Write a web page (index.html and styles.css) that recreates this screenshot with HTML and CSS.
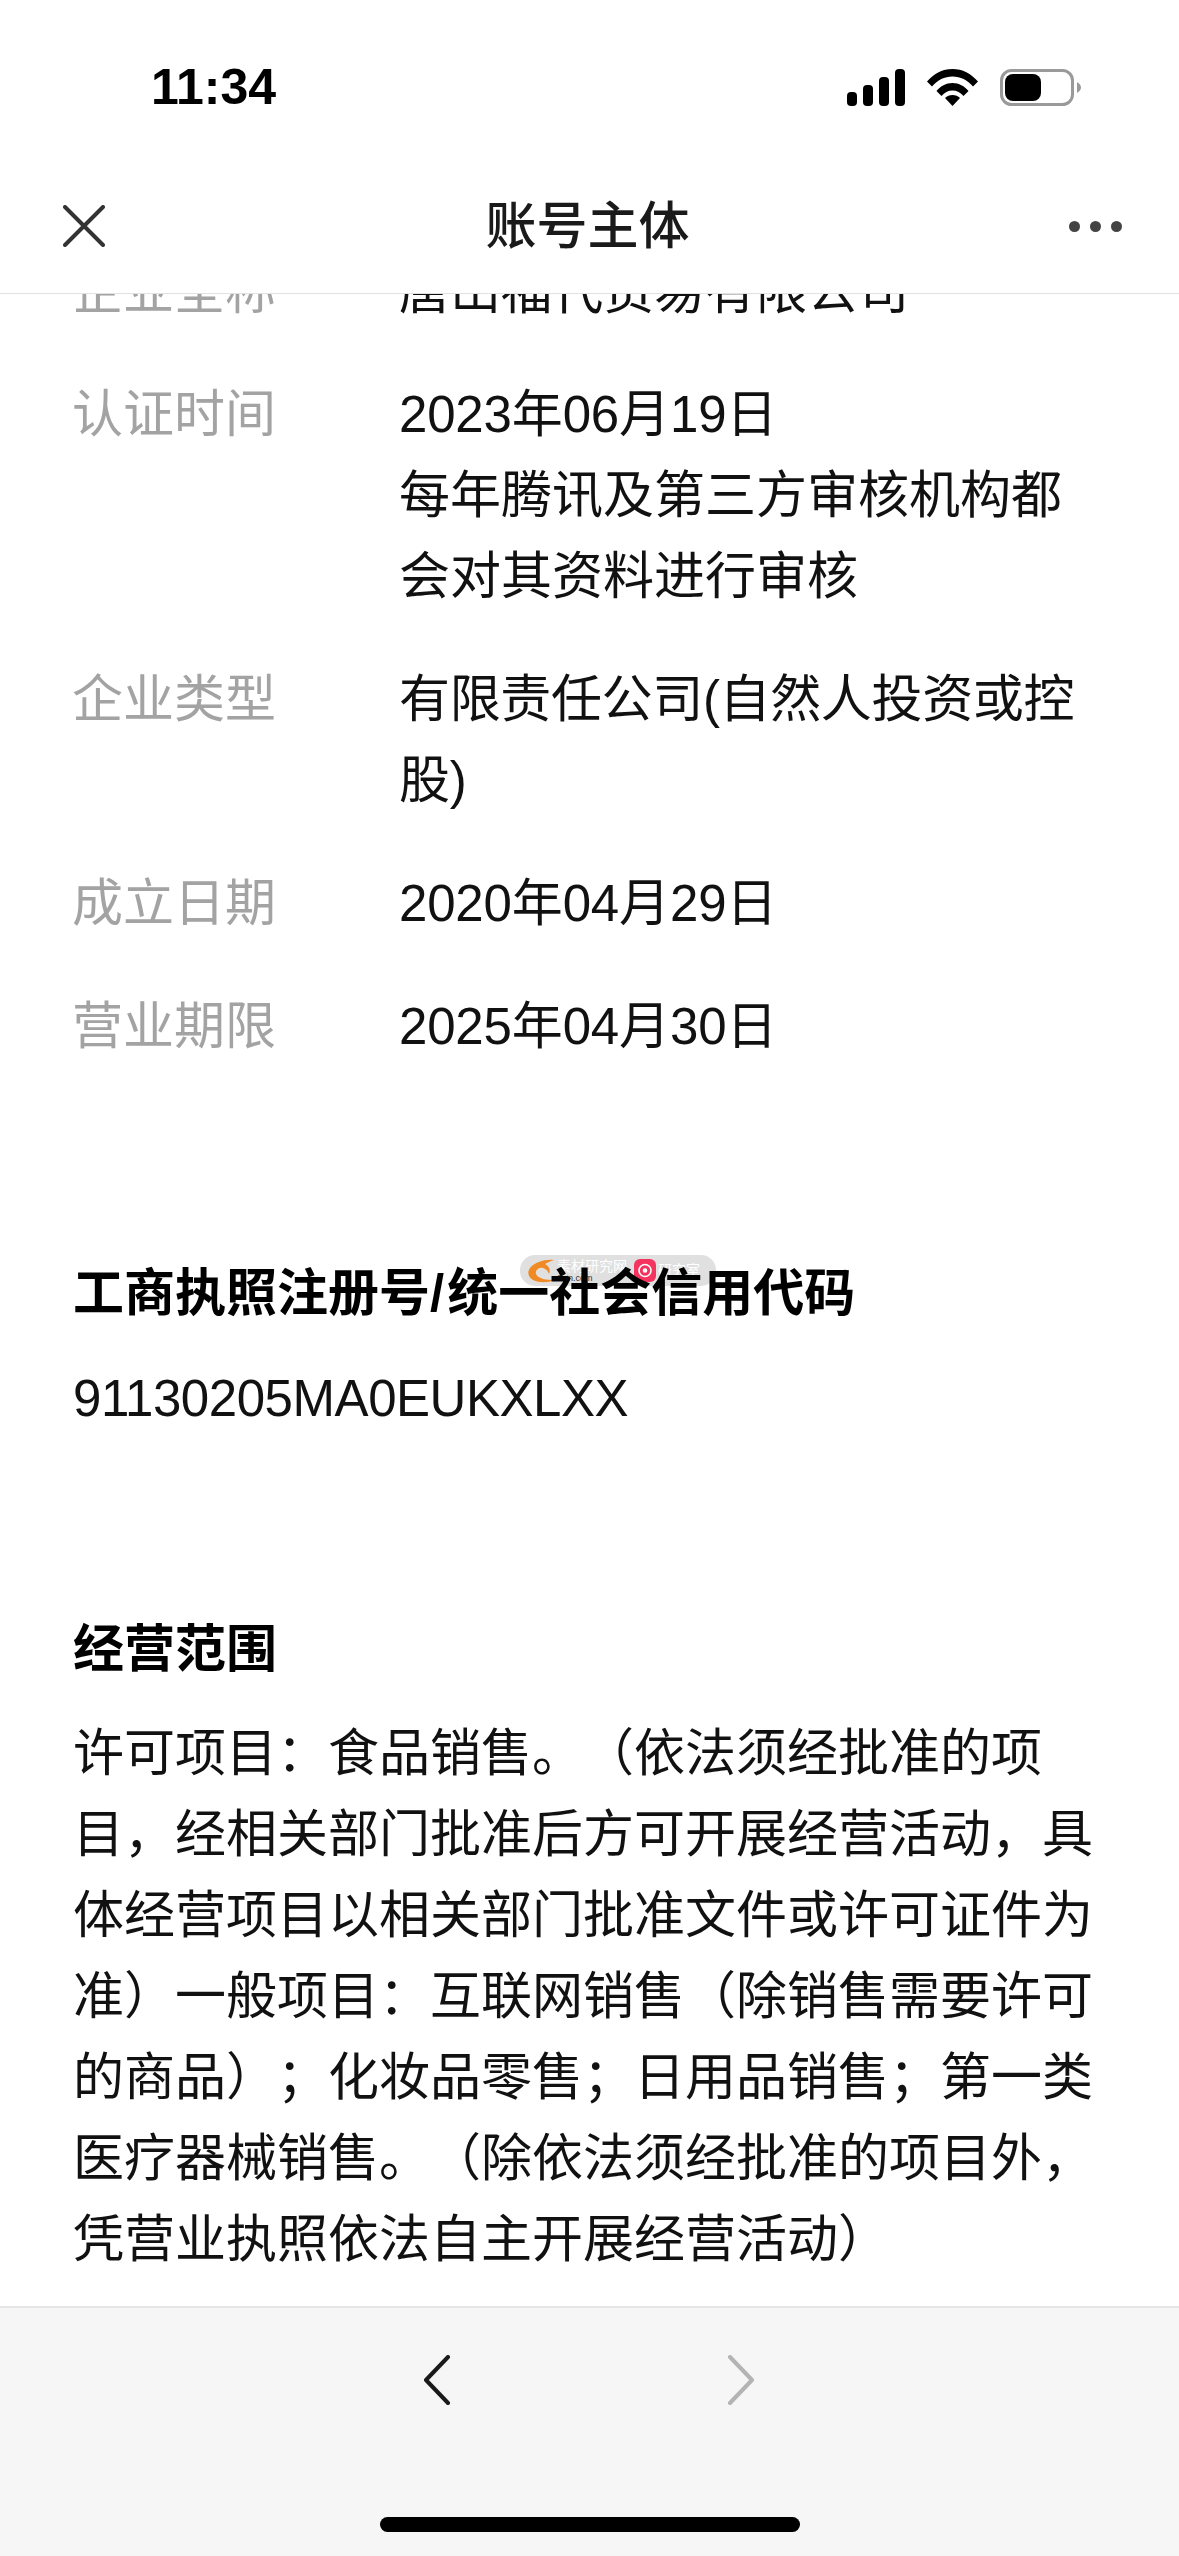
FILE: index.html
```html
<!DOCTYPE html>
<html lang="zh-CN">
<head>
<meta charset="utf-8">
<title>账号主体</title>
<link rel="stylesheet" href="styles.css">
</head>
<body>
<div class="page">
  <header class="top">
    <div class="status">
      <span class="time">11:34</span>
      <div class="status-icons">
        <svg class="signal" width="58" height="37" viewBox="0 0 58 37"><rect x="0" y="23" width="10" height="14" rx="4"/><rect x="16" y="16" width="10" height="21" rx="4"/><rect x="32" y="8" width="10" height="29" rx="4"/><rect x="48" y="0" width="10" height="37" rx="4"/></svg>
        <svg class="wifi" width="51" height="37" viewBox="0 0 51 37"><path d="M0 12.5C7 4.5 15.5 0 25.5 0S44 4.500 51 12.500L46 17.500C40.500 11 33.500 7.500 25.500 7.500S10.500 11 5 17.500Z"/><path d="M9.500 22C13.500 17 19 14 25.500 14S37.500 17 41.500 22L36.500 27C33.500 23.500 30 21.500 25.500 21.500S17.500 23.500 14.500 27Z"/><path d="M18 29C20 27 22.500 26 25.500 26S31 27 33 29L25.500 37Z"/></svg>
        <svg class="battery" width="81" height="37" viewBox="0 0 81 37"><rect x="1.500" y="1.500" width="71" height="34" rx="10" fill="none" stroke="#9a9a9a" stroke-width="3"/><rect x="5" y="5" width="36" height="27" rx="8" fill="#000"/><path d="M77 13C79.500 14.500 81 16.500 81 18.500S79.500 22.500 77 24Z" fill="#9a9a9a"/></svg>
      </div>
    </div>
    <nav class="nav">
      <svg class="close" width="42" height="42" viewBox="0 0 42 42"><path d="M2 2L40 40M40 2L2 40" fill="none" stroke="#333" stroke-width="4" stroke-linecap="round"/></svg>
      <h1 class="title">账号主体</h1>
      <div class="more"><i></i><i></i><i></i></div>
    </nav>
  </header>

  <main class="content">
    <div class="scroll">
      <dl class="info">
        <div class="row"><dt>企业全称</dt><dd>唐山福代贸易有限公司</dd></div>
        <div class="row"><dt>认证时间</dt><dd><span class="num">2023</span>年<span class="num">06</span>月<span class="num">19</span>日<br>每年腾讯及第三方审核机构都会对其资料进行审核</dd></div>
        <div class="row"><dt>企业类型</dt><dd class="company-type">有限责任公司(自然人投资或控股)</dd></div>
        <div class="row"><dt>成立日期</dt><dd><span class="num">2020</span>年<span class="num">04</span>月<span class="num">29</span>日</dd></div>
        <div class="row"><dt>营业期限</dt><dd><span class="num">2025</span>年<span class="num">04</span>月<span class="num">30</span>日</dd></div>
      </dl>

      <section class="block block-license">
        <div class="mark">
          <svg class="mark-logo" width="28" height="24" viewBox="0 0 28 24"><path d="M27 1C18 0 8 3 3 9C0 13 1 18 6 21C12 24 21 24 27 21C20 21 11 20 9 15C8 11 12 8 16 9C19 10 21 12 22 15C24 11 22 7 18 5C21 3 24 2 27 1Z" fill="#f08a24"/></svg>
          <span class="mark-text">素材研究网<small>Sun.com</small></span>
          <svg class="mark-app" width="22" height="23" viewBox="0 0 22 23"><rect width="22" height="23" rx="6" fill="#f4345f"/><circle cx="11" cy="11.500" r="6" fill="none" stroke="#fff" stroke-width="1.600"/><circle cx="11" cy="11.500" r="2.300" fill="#fff"/></svg>
          <span class="mark-text mark-text-end">研究室</span>
        </div>
        <h2 class="heading">工商执照注册号<span class="slash">/</span>统一社会信用代码</h2>
        <p class="text code">91130205MA0EUKXLXX</p>
      </section>

      <section class="block block-scope">
        <h2 class="heading">经营范围</h2>
        <p class="text">许可项目：食品销售。（依法须经批准的项<br>目，经相关部门批准后方可开展经营活动，具体经营项目以相关部门批准文件或许可证件为准）一般项目：互联网销售（除销售需要许可的商品）；化妆品零售；日用品销售；第一类医疗器械销售。（除依法须经批准的项目外，凭营业执照依法自主开展经营活动）</p>
      </section>
    </div>
  </main>

  <footer class="bottom">
    <div class="arrows">
      <svg width="28" height="50" viewBox="0 0 28 50"><path d="M25 2L3 25L25 48" fill="none" stroke="#1a1a1a" stroke-width="4" stroke-linecap="round" stroke-linejoin="round"/></svg>
      <svg width="28" height="50" viewBox="0 0 28 50"><path d="M3 2L25 25L3 48" fill="none" stroke="#b4b4b4" stroke-width="4" stroke-linecap="round" stroke-linejoin="round"/></svg>
    </div>
    <div class="home"></div>
  </footer>
</div>
</body>
</html>
```

FILE: styles.css
```css
* { box-sizing: border-box; }
html, body { margin: 0; padding: 0; background: #fff; }
body { font-family: "Liberation Sans", "Noto Sans CJK SC", sans-serif; color: #111; text-spacing-trim: space-all; }

.page { width: 1179px; height: 2556px; display: flex; flex-direction: column; overflow: hidden; }

.top { height: 294px; flex: none; background: #fff; border-bottom: 1px solid #e2e2e2; }
.status { height: 175px; padding: 63px 98px 0 151px; display: flex; justify-content: space-between; align-items: flex-start; }
.time { font-size: 50px; font-weight: 700; line-height: 48px; color: #000; }
.status-icons { display: flex; align-items: center; gap: 22px; margin-top: 6px; }
.status-icons svg { display: block; fill: #000; }

.nav { height: 118px; padding: 0 57px 0 63px; display: flex; align-items: flex-start; justify-content: space-between; position: relative; }
.close { margin-top: 30px; }
.title { position: absolute; left: -4px; right: 0; top: 11px; margin: 0; text-align: center; font-size: 51px; line-height: 81px; font-weight: 500; color: #1a1a1a; }
.more { display: flex; gap: 10px; margin-top: 46px; }
.more i { width: 11px; height: 11px; border-radius: 50%; background: #444; }

.content { flex: 1; overflow: hidden; background: #fff; }
.scroll { margin-top: -43px; padding: 0 73px 0 72px; font-size: 51px; line-height: 81px; }

.info { margin: 0; display: flex; flex-direction: column; gap: 42px; }
.row { display: grid; grid-template-columns: 327px 1fr; }
.row dt { color: #a3a3a3; }
.row dd { margin: 0; color: #111; }
.num { letter-spacing: -0.2px; }
.row .company-type { letter-spacing: -0.35px; }

.block { position: relative; isolation: isolate; padding-left: 1px; }
.block-license { margin-top: 186px; }
.block-scope { margin-top: 170px; }
.heading { margin: 0 0 24px; font-size: 51px; line-height: 81px; font-weight: 700; color: #000; }
.block-scope .heading { margin-bottom: 23px; }
.slash { letter-spacing: 3px; }
.text { margin: 0; color: #111; }
.code { letter-spacing: -0.45px; }

.mark { position: absolute; z-index: -1; left: 448px; top: 2px; width: 196px; height: 31px; border-radius: 15px; background: #e0e0e0; display: flex; align-items: center; padding: 0 7px; font-size: 14px; line-height: 15px; color: #fff; overflow: hidden; }
.mark-logo { flex: none; }
.mark-text { display: flex; flex-direction: column; margin-left: 2px; width: 74px; white-space: nowrap; }
.mark-text small { font-size: 9px; line-height: 9px; color: #333; }
.mark-app { flex: none; margin-left: 3px; }
.mark-text-end { width: 50px; margin-left: 2px; }

.bottom { height: 250px; flex: none; background: #f6f6f6; border-top: 2px solid #e6e6e6; position: relative; }
.arrows { display: flex; justify-content: center; gap: 276px; padding: 47px 0 0 0; margin-left: -1px; }
.arrows svg { display: block; }
.home { position: absolute; left: 380px; top: 209px; width: 420px; height: 15px; border-radius: 8px; background: #000; }
```
